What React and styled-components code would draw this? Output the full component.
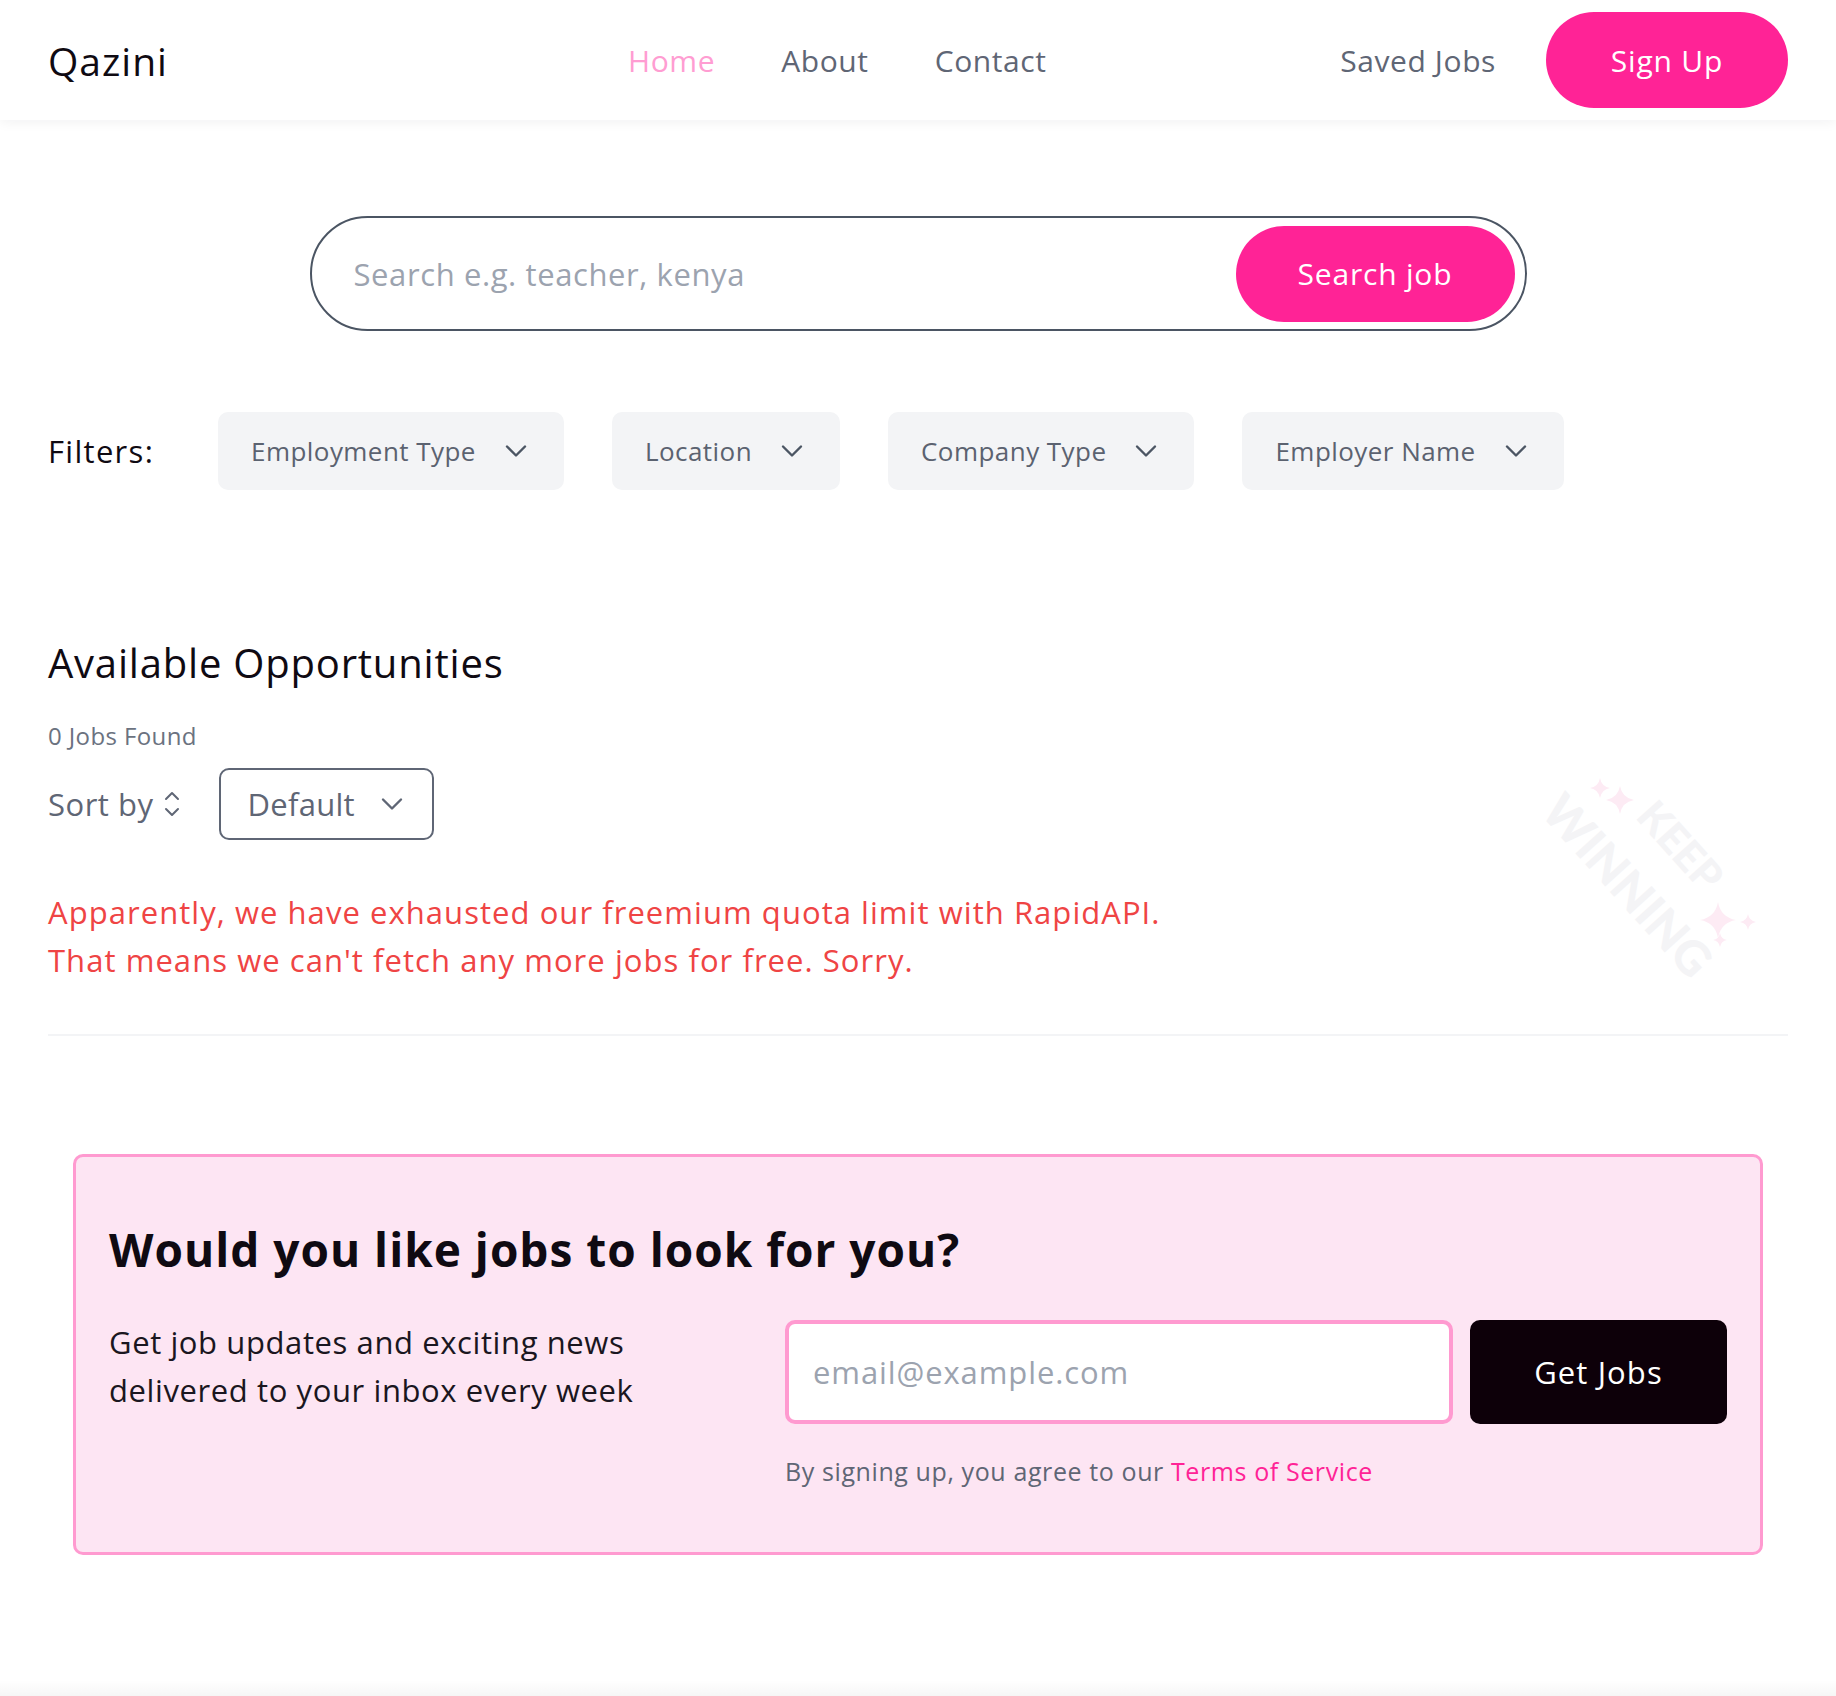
// Dependencies
import React from 'react';
import styled, { createGlobalStyle } from 'styled-components';
import { ChevronDown } from 'lucide-react';

// Styles
const GlobalStyle = createGlobalStyle`
  body {
    margin: 0;
    background: #ffffff;
    font-family: 'Open Sans', 'Noto Sans', sans-serif;
    color: #0f0a12;
  }
  * { box-sizing: border-box; }
`

const Page = styled.div`
  min-height: 1696px;
  display: flex;
  flex-direction: column;
`

const Header = styled.header`
  height: 120px;
  padding: 0 48px;
  display: flex;
  align-items: center;
  background: #fff;
  box-shadow: 0 2px 12px rgba(17, 24, 39, 0.06);
`

const Brand = styled.div`
  flex: 0 0 580px;
  font-size: 39px;
  letter-spacing: 1px;
  color: #0f0a12;
`

const Nav = styled.nav`
  display: flex;
  gap: 66px;
`

const NavLink = styled.a`
  font-size: 30px;
  letter-spacing: 0.6px;
  color: ${(p) => (p.$active ? '#ff9dd2' : '#5f6675')};
  text-decoration: none;
  cursor: pointer;
`

const Actions = styled.div`
  margin-left: auto;
  display: flex;
  align-items: center;
  gap: 50px;
`

const PinkButton = styled.button`
  border: none;
  background: #ff2396;
  color: #fff;
  font-family: inherit;
  font-size: 30px;
  font-weight: 500;
  letter-spacing: 0.8px;
  border-radius: 999px;
  width: ${(p) => p.$w}px;
  height: 96px;
  cursor: pointer;
`

const Main = styled.main`
  padding: 0 48px;
`

const SearchBar = styled.div`
  width: 1217px;
  height: 115px;
  margin: 96px auto 0;
  border: 2px solid #4b5563;
  border-radius: 60px;
  display: flex;
  align-items: center;
  padding: 0 10px 0 40px;
`

const SearchInput = styled.input`
  flex: 1;
  border: none;
  outline: none;
  font-family: inherit;
  font-size: 31px;
  letter-spacing: 0.6px;
  color: #111;
  background: transparent;
  &::placeholder { color: #9ca3af; }
`

const FilterRow = styled.div`
  margin-top: 81px;
  display: flex;
  align-items: center;
  gap: 48px;
`

const FilterLabel = styled.span`
  font-size: 31px;
  letter-spacing: 1.3px;
  color: #0f0a12;
  width: 122px;
`

const Pill = styled.button`
  height: 78px;
  border: none;
  border-radius: 10px;
  background: #f3f4f6;
  display: flex;
  align-items: center;
  gap: 22px;
  padding: 0 30px 0 33px;
  font-family: inherit;
  font-size: 26px;
  letter-spacing: 0.45px;
  color: #5b6270;
  cursor: pointer;
  svg { color: #4b5563; }
`

const Opportunities = styled.section`
  position: relative;
  margin-top: 150px;
`

const Title = styled.h2`
  margin: 0;
  font-size: 40px;
  font-weight: 500;
  letter-spacing: 0.8px;
  line-height: 46px;
  color: #0f0a12;
`

const Count = styled.div`
  margin-top: 35px;
  font-size: 24px;
  letter-spacing: 0.4px;
  color: #6b7280;
  line-height: 30px;
`

const SortRow = styled.div`
  margin-top: 17px;
  display: flex;
  align-items: center;
  gap: 38px;
`

const SortLabel = styled.span`
  display: flex;
  align-items: center;
  gap: 10px;
  font-size: 31px;
  letter-spacing: 0.5px;
  color: #5f6675;
`

const Select = styled.div`
  width: 215px;
  height: 72px;
  border: 2px solid #5f6675;
  border-radius: 10px;
  display: flex;
  align-items: center;
  justify-content: space-between;
  padding: 0 22px 0 26px;
  font-size: 31px;
  letter-spacing: 0.3px;
  color: #5f6675;
`

const ErrorText = styled.p`
  margin: 48px 0 0;
  font-size: 31px;
  letter-spacing: 1.05px;
  line-height: 48px;
  color: #ef4444;
`

const Divider = styled.hr`
  margin: 50px 0 0;
  border: none;
  border-top: 2px solid #f3f4f6;
`

const Watermark = styled.svg`
  position: absolute;
  right: 28px;
  top: 130px;
  width: 220px;
  height: 220px;
  overflow: visible;
  pointer-events: none;
`

const Card = styled.div`
  margin: 118px 25px 0;
  border: 3px solid #ff9ad0;
  border-radius: 10px;
  background: #fde5f3;
  padding: 64px 33px 64px 33px;
`

const CardTitle = styled.h3`
  margin: 0;
  font-size: 46px;
  font-weight: 700;
  letter-spacing: 1px;
  line-height: 56px;
  color: #0f0a12;
`

const CardBody = styled.div`
  margin-top: 41px;
  display: flex;
`

const CardText = styled.p`
  flex: 0 0 676px;
  margin: 0;
  font-size: 31px;
  letter-spacing: 0.6px;
  line-height: 48px;
  color: #1a1620;
`

const FormCol = styled.div`
  flex: 1;
  padding-top: 2px;
`

const FormRow = styled.div`
  display: flex;
  gap: 17px;
`

const EmailInput = styled.input`
  flex: 1;
  height: 104px;
  border: 4px solid #ff9ad0;
  border-radius: 10px;
  background: #fff;
  padding: 0 24px;
  font-family: inherit;
  font-size: 31px;
  letter-spacing: 0.9px;
  outline: none;
  &::placeholder { color: #9ca3af; }
`

const DarkButton = styled.button`
  width: 257px;
  height: 104px;
  border: none;
  border-radius: 10px;
  background: #0d0009;
  color: #fff;
  font-family: inherit;
  font-size: 31px;
  font-weight: 500;
  letter-spacing: 1.1px;
  cursor: pointer;
`

const Terms = styled.p`
  margin: 30px 0 0;
  font-size: 25px;
  letter-spacing: 0.6px;
  color: #5f6675;
  a { color: #ff2396; text-decoration: none; }
`

const Footer = styled.footer`
  margin-top: auto;
  height: 16px;
  background: linear-gradient(rgba(0, 0, 0, 0), rgba(0, 0, 0, 0.035));
`

// Components
const SortIcon = () => (
  <svg width="18" height="28" viewBox="0 0 18 28" fill="none" stroke="#5f6675" strokeWidth="2" strokeLinecap="round" strokeLinejoin="round">
    <path d="M3 9 L9 3 L15 9" />
    <path d="M3 19 L9 25 L15 19" />
  </svg>
)

const Sparkle = ({ x, y, r }) => (
  <path
    d={`M${x} ${y - r} Q${x + r * 0.15} ${y - r * 0.15} ${x + r} ${y} Q${x + r * 0.15} ${y + r * 0.15} ${x} ${y + r} Q${x - r * 0.15} ${y + r * 0.15} ${x - r} ${y} Q${x - r * 0.15} ${y - r * 0.15} ${x} ${y - r} Z`}
    fill="#fdebf4"
  />
)

const KeepWinning = () => (
  <Watermark viewBox="0 0 220 220">
    <Sparkle x={60} y={18} r={10} />
    <Sparkle x={80} y={30} r={14} />
    <Sparkle x={178} y={150} r={18} />
    <Sparkle x={208} y={152} r={8} />
    <Sparkle x={180} y={170} r={7} />
    <g transform="translate(88 115) rotate(48)" fontFamily="Lato, sans-serif" fontWeight="900" fill="#f4f4f6" textAnchor="middle">
      <text x="0" y="18" fontSize="48">WINNING</text>
      <text x="6" y="-50" fontSize="42">KEEP</text>
    </g>
  </Watermark>
)

const filters = ['Employment Type', 'Location', 'Company Type', 'Employer Name']

const App = () => {
  return (
    <Page>
      <GlobalStyle />
      <Header>
        <Brand>Qazini</Brand>
        <Nav>
          <NavLink $active>Home</NavLink>
          <NavLink>About</NavLink>
          <NavLink>Contact</NavLink>
        </Nav>
        <Actions>
          <NavLink>Saved Jobs</NavLink>
          <PinkButton $w={242}>Sign Up</PinkButton>
        </Actions>
      </Header>

      <Main>
        <SearchBar>
          <SearchInput placeholder="Search e.g. teacher, kenya" />
          <PinkButton $w={279}>Search job</PinkButton>
        </SearchBar>

        <FilterRow>
          <FilterLabel>Filters:</FilterLabel>
          {filters.map((f) => (
            <Pill key={f}>
              {f}
              <ChevronDown size={36} strokeWidth={1.6} />
            </Pill>
          ))}
        </FilterRow>

        <Opportunities>
          <KeepWinning />
          <Title>Available Opportunities</Title>
          <Count>0 Jobs Found</Count>
          <SortRow>
            <SortLabel>Sort by <SortIcon /></SortLabel>
            <Select>
              Default
              <ChevronDown size={36} strokeWidth={1.6} />
            </Select>
          </SortRow>
          <ErrorText>
            Apparently, we have exhausted our freemium quota limit with RapidAPI.
            <br />
            That means we can't fetch any more jobs for free. Sorry.
          </ErrorText>
          <Divider />
        </Opportunities>

        <Card>
          <CardTitle>Would you like jobs to look for you?</CardTitle>
          <CardBody>
            <CardText>
              Get job updates and exciting news
              <br />
              delivered to your inbox every week
            </CardText>
            <FormCol>
              <FormRow>
                <EmailInput placeholder="email@example.com" />
                <DarkButton>Get Jobs</DarkButton>
              </FormRow>
              <Terms>
                By signing up, you agree to our <a>Terms of Service</a>
              </Terms>
            </FormCol>
          </CardBody>
        </Card>
      </Main>
      <Footer />
    </Page>
  )
}

export default App
